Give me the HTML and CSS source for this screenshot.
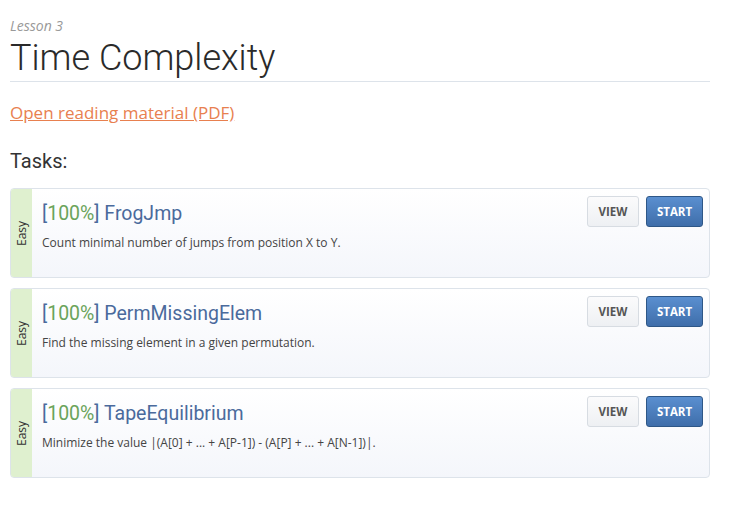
FILE: index.html
```html
<!DOCTYPE html>
<html>
<head>
<meta charset="utf-8">
<link rel="stylesheet" href="styles.css">
</head>
<body>
<div class="page">
  <div class="lesson">Lesson 3</div>
  <h1 class="title">Time Complexity</h1>
  <a class="reading" href="#">Open reading material (PDF)</a>
  <h2 class="tasks-head">Tasks:</h2>
  <div class="tasks">
    <div class="task">
      <div class="level"><span>Easy</span></div>
      <div class="body">
        <div class="name"><span class="br">[</span><span class="score">100%</span><span class="br">]</span> FrogJmp</div>
        <div class="desc">Count minimal number of jumps from position X to Y.</div>
      </div>
      <div class="actions">
        <button class="btn view">VIEW</button>
        <button class="btn start">START</button>
      </div>
    </div>
    <div class="task">
      <div class="level"><span>Easy</span></div>
      <div class="body">
        <div class="name"><span class="br">[</span><span class="score">100%</span><span class="br">]</span> PermMissingElem</div>
        <div class="desc">Find the missing element in a given permutation.</div>
      </div>
      <div class="actions">
        <button class="btn view">VIEW</button>
        <button class="btn start">START</button>
      </div>
    </div>
    <div class="task">
      <div class="level"><span>Easy</span></div>
      <div class="body">
        <div class="name"><span class="br">[</span><span class="score">100%</span><span class="br">]</span> TapeEquilibrium</div>
        <div class="desc">Minimize the value |(A[0] + ... + A[P-1]) - (A[P] + ... + A[N-1])|.</div>
      </div>
      <div class="actions">
        <button class="btn view">VIEW</button>
        <button class="btn start">START</button>
      </div>
    </div>
  </div>
</div>
</body>
</html>
```

FILE: styles.css
```css
html, body {
  margin: 0;
  padding: 0;
  background: #fff;
}
.page {
  width: 700px;
  padding: 16px 10px 0 10px;
  font-family: "Open Sans", "Liberation Sans", sans-serif;
  color: #333;
}
.lesson {
  font-style: italic;
  font-size: 14px;
  line-height: 20px;
  color: #999;
}
.title {
  margin: 0;
  font-family: Roboto, "Liberation Sans", sans-serif;
  font-weight: 300;
  font-size: 36px;
  line-height: 44px;
  color: #2a2a2a;
  border-bottom: 1px solid #dde3ea;
  height: 45px;
}
.reading {
  display: inline-block;
  margin-top: 20px;
  font-size: 17px;
  line-height: 22px;
  color: #e8804f;
  text-decoration: underline;
}
.tasks-head {
  margin: 24px 0 0 0;
  font-family: Roboto, "Liberation Sans", sans-serif;
  font-weight: 400;
  font-size: 20px;
  line-height: 26px;
  color: #333;
}
.tasks {
  margin-top: 14px;
  display: flex;
  flex-direction: column;
  gap: 10px;
}
.task {
  display: flex;
  height: 88px;
  border: 1px solid #dde3ea;
  border-radius: 4px;
  background: linear-gradient(#ffffff, #f4f6fb);
  overflow: hidden;
}
.level {
  width: 21px;
  flex: none;
  background: #dff0cf;
  display: flex;
  align-items: center;
  justify-content: center;
}
.level span {
  transform: rotate(-90deg);
  font-size: 12px;
  color: #333;
  white-space: nowrap;
}
.body {
  flex: 1;
  padding: 12px 0 0 10px;
}
.name {
  font-family: Roboto, "Liberation Sans", sans-serif;
  font-weight: 400;
  font-size: 19.5px;
  line-height: 26px;
  color: #4a6a9c;
}
.score {
  color: #6aa35a;
}
.desc {
  margin-top: 8px;
  font-size: 12px;
  line-height: 16px;
  color: #444;
}
.actions {
  display: flex;
  gap: 7px;
  padding: 7px 6px 0 0;
  align-items: flex-start;
}
.btn {
  height: 31px;
  font-family: "Open Sans", "Liberation Sans", sans-serif;
  font-weight: 700;
  font-size: 11.5px;
  border-radius: 3px;
  padding: 0;
  cursor: pointer;
}
.view {
  width: 52px;
  background: linear-gradient(#fbfbfc, #eef0f3);
  border: 1px solid #d7dce2;
  color: #555;
}
.start {
  width: 57px;
  background: linear-gradient(#5a8fd0, #3f6eaa);
  border: 1px solid #2e5787;
  color: #fff;
}
```
